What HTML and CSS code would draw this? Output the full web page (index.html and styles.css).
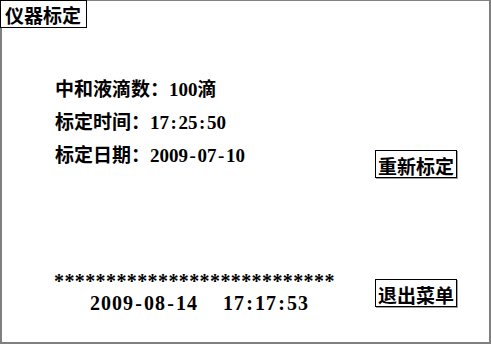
FILE: index.html
```html
<!DOCTYPE html>
<html lang="zh-CN">
<head>
<meta charset="utf-8">
<title>仪器标定</title>
<link rel="stylesheet" href="styles.css">
</head>
<body>
<div class="screen">
  <div class="title">仪器标定</div>
  <div class="main">
    <div class="info">
      <div class="rows">
        <div class="row">中和液滴数：100滴</div>
        <div class="row">标定时间：17<span class="sep">:</span>25<span class="sep">:</span>50</div>
        <div class="row">标定日期：2009<span class="sep">-</span>07<span class="sep">-</span>10</div>
      </div>
      <div class="btn btn-top">重新标定</div>
    </div>
    <div class="footer">
      <div class="clock">
        <div class="stars">***************************</div>
        <div class="datetime">
          <span>2009<span class="sep">-</span>08<span class="sep">-</span>14</span>
          <span>17<span class="sep">:</span>17<span class="sep">:</span>53</span>
        </div>
      </div>
      <div class="btn btn-bottom">退出菜单</div>
    </div>
  </div>
</div>
</body>
</html>
```
FILE: styles.css
```css
html, body {
  margin: 0;
  padding: 0;
  background: #fff;
}

.screen {
  width: 491px;
  height: 344px;
  box-sizing: border-box;
  border: 2px solid #808080;
  border-top-width: 1px;
  display: flex;
  flex-direction: column;
  background: #fff;
  color: #000;
  font: bold 19px "Liberation Serif", "Noto Sans CJK SC", serif;
}

.title {
  align-self: flex-start;
  margin: -1px 0 0 -2px;
  width: 87px;
  height: 28px;
  box-sizing: border-box;
  border: 1px solid #000;
  background: #fff;
  padding: 0 0 0 4px;
  line-height: 27px;
  font-family: "Noto Sans CJK SC", sans-serif;
  white-space: nowrap;
}

.main {
  flex: 1;
  display: flex;
  flex-direction: column;
  padding: 0 32px 0 53px;
}

.info {
  display: flex;
  justify-content: space-between;
  align-items: flex-start;
  margin-top: 45px;
}

.rows {
  display: flex;
  flex-direction: column;
}

.row {
  line-height: 33px;
  white-space: nowrap;
}

.sep {
  display: inline-block;
  width: 9.5px;
  text-align: center;
}

.btn {
  width: 82px;
  height: 28px;
  box-sizing: border-box;
  border: 1px solid #000;
  box-shadow: 1px 1px 0 #a0a0a0;
  font-family: "Noto Sans CJK SC", sans-serif;
  line-height: 30px;
  text-align: center;
  white-space: nowrap;
}

.btn-top {
  margin-top: 77px;
}

.footer {
  display: flex;
  justify-content: space-between;
  align-items: flex-start;
  margin-top: 93px;
}

.clock {
  display: flex;
  flex-direction: column;
}

.stars {
  font-size: 20px;
  letter-spacing: 0.4px;
  line-height: 20px;
  height: 20px;
  margin-left: -1px;
}

.datetime {
  display: flex;
  gap: 25px;
  padding-left: 35px;
  font-size: 20px;
  line-height: 24px;
  letter-spacing: 1px;
}

.datetime .sep {
  width: 10px;
}

.btn-bottom {
  margin-top: 8px;
}
```
